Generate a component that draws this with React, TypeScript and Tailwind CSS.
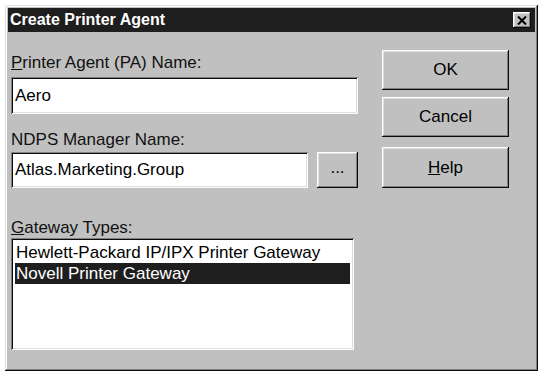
import React from "react";

const raised =
  "shadow-[inset_-1px_-1px_#0a0a0a,inset_1px_1px_#ffffff,inset_-2px_-2px_#808080,inset_2px_2px_#dfdfdf]";
const sunken =
  "shadow-[inset_1px_1px_#808080,inset_-1px_-1px_#ffffff,inset_2px_2px_#0a0a0a,inset_-2px_-2px_#dfdfdf]";

function Button({ children, className = "" }: { children: React.ReactNode; className?: string }) {
  return (
    <button className={`flex items-center justify-center bg-[#c0c0c0] text-[17px] text-black ${raised} ${className}`}>
      {children}
    </button>
  );
}

export default function App() {
  return (
    <div className="h-[373px] w-[540px] bg-white pl-[5px] pt-[5px] font-['Liberation_Sans',Arial,sans-serif]">
      <div
        className={`flex h-[366px] w-[533px] flex-col bg-[#c0c0c0] p-[3px] shadow-[inset_-1px_-1px_#0a0a0a,inset_1px_1px_#dfdfdf,inset_-2px_-2px_#808080,inset_2px_2px_#ffffff]`}
      >
        <div className="flex h-[24px] items-center justify-between bg-[#1e1e1e] pl-[2px] pr-[4px]">
          <span className="text-[16px] font-bold leading-none text-white">Create Printer Agent</span>
          <span className={`flex h-[16px] w-[18px] items-center justify-center bg-[#c0c0c0] ${raised}`}>
            <svg width="10" height="9" viewBox="0 0 10 9">
              <path d="M1 0.5 L9 8.5 M9 0.5 L1 8.5" stroke="#000" strokeWidth="2" />
            </svg>
          </span>
        </div>

        <div className="flex pl-[3px]">
          <div className="flex w-[347px] flex-col">
            <label className="mt-[21px] h-[20px] text-[17px] leading-[20px] text-[#111]">
              <span className="underline">P</span>rinter Agent (PA) Name:
            </label>
            <div className={`mt-[4px] flex h-[37px] items-center bg-white px-[4px] text-[17px] text-black ${sunken}`}>
              Aero
            </div>

            <label className="mt-[16px] h-[20px] text-[17px] leading-[20px] text-[#111]">NDPS Manager Name:</label>
            <div className="mt-[2px] flex items-center gap-[9px]">
              <div className={`flex h-[36px] w-[297px] items-center bg-white px-[4px] text-[17px] text-black ${sunken}`}>
                Atlas.Marketing.Group
              </div>
              <Button className="h-[36px] w-[41px] pb-[4px] text-[13px] text-[#555]">...</Button>
            </div>

            <label className="mt-[30px] h-[20px] text-[17px] leading-[20px] text-[#111]">
              <span className="underline">G</span>ateway Types:
            </label>
            <div className={`flex h-[112px] w-[343px] flex-col bg-white p-[4px] text-[17px] leading-[21px] text-black ${sunken}`}>
              <div className="px-[1px]">Hewlett-Packard IP/IPX Printer Gateway</div>
              <div className="bg-[#1e1e1e] px-[1px] text-white">Novell Printer Gateway</div>
            </div>
          </div>

          <div className="ml-[24px] flex w-[127px] flex-col pt-[18px]">
            <Button className="h-[40px]">OK</Button>
            <Button className="mt-[7px] h-[40px]">Cancel</Button>
            <Button className="mt-[10px] h-[41px]">
              <span className="underline">H</span>elp
            </Button>
          </div>
        </div>
      </div>
    </div>
  );
}
